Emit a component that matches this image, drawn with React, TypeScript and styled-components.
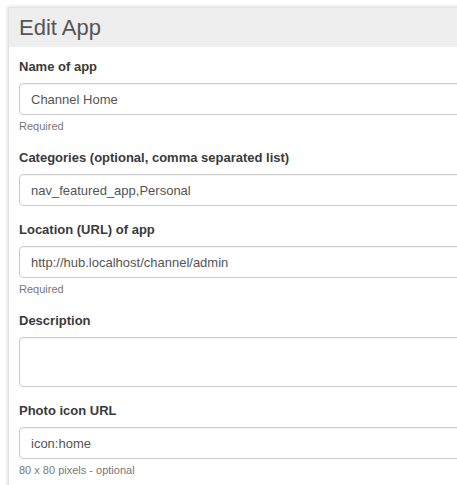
import React from "react";
import styled, { createGlobalStyle } from "styled-components";

const Global = createGlobalStyle`
  html, body { margin: 0; padding: 0; background: #fff; }
  body { font-family: "Liberation Sans", Arial, sans-serif; overflow: hidden; }
`;

const Page = styled.div`
  padding: 7px 0 0 8px;
  width: 457px;
  height: 485px;
  box-sizing: border-box;
  overflow: hidden;
`;

const Panel = styled.div`
  width: 640px;
  background: #fff;
  border: 1px solid #e3e3e3;
  border-right: none;
  box-shadow: 0 0 4px rgba(0, 0, 0, 0.18);
`;

const Header = styled.div`
  background: #eeeeee;
  height: 39px;
  display: flex;
  align-items: center;
  padding: 0 10px;
`;

const Title = styled.h2`
  margin: 0;
  font-size: 22px;
  font-weight: normal;
  color: #555;
  line-height: 1;
`;

const Body = styled.div`
  padding: 10px 10px 20px 10px;
  display: flex;
  flex-direction: column;
  gap: 14px;
`;

const Group = styled.div`
  display: flex;
  flex-direction: column;
`;

const Label = styled.label`
  font-size: 13px;
  font-weight: bold;
  color: #3a3a3a;
  line-height: 18px;
  padding-top: 1px;
  margin-bottom: 7px;
`;

const Input = styled.input`
  box-sizing: border-box;
  height: 32px;
  border: 1px solid #ccc;
  border-radius: 4px;
  padding: 0 11px;
  font-family: "Liberation Sans", Arial, sans-serif;
  font-size: 13px;
  color: #555;
  box-shadow: inset 0 1px 1px rgba(0, 0, 0, 0.05);
  outline: none;
`;

const TextArea = styled.textarea`
  box-sizing: border-box;
  height: 50px;
  border: 1px solid #ccc;
  border-radius: 4px;
  padding: 6px 11px;
  font-family: "Liberation Sans", Arial, sans-serif;
  font-size: 13px;
  color: #555;
  resize: none;
  box-shadow: inset 0 1px 1px rgba(0, 0, 0, 0.05);
  outline: none;
`;

const Help = styled.span`
  font-size: 11px;
  line-height: 15px;
  color: #777;
  margin-top: 4px;
`;

type Field = { label: string; value?: string; help?: string; multi?: boolean };

const fields: Field[] = [
  { label: "Name of app", value: "Channel Home", help: "Required" },
  { label: "Categories (optional, comma separated list)", value: "nav_featured_app,Personal" },
  { label: "Location (URL) of app", value: "http://hub.localhost/channel/admin", help: "Required" },
  { label: "Description", multi: true },
  { label: "Photo icon URL", value: "icon:home", help: "80 x 80 pixels - optional" },
];

export default function App() {
  return (
    <>
      <Global />
      <Page>
        <Panel>
          <Header>
            <Title>Edit App</Title>
          </Header>
          <Body>
            {fields.map((f) => (
              <Group key={f.label}>
                <Label>{f.label}</Label>
                {f.multi ? (
                  <TextArea defaultValue="" />
                ) : (
                  <Input defaultValue={f.value} readOnly />
                )}
                {f.help && <Help>{f.help}</Help>}
              </Group>
            ))}
          </Body>
        </Panel>
      </Page>
    </>
  );
}
